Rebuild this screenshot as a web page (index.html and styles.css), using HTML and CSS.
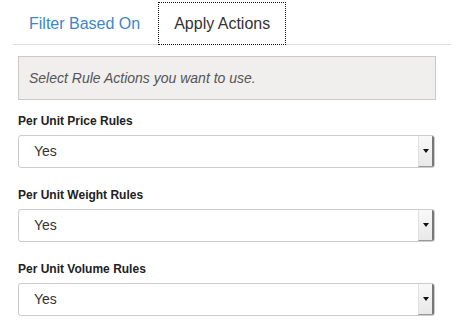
FILE: index.html
```html
<!DOCTYPE html>
<html lang="en">
<head>
    <meta charset="UTF-8">
    <meta name="viewport" content="width=device-width, initial-scale=1.0">
    <title>Rule Actions</title>
    <link rel="stylesheet" href="styles.css">
</head>

<body>

    <ul class="nav-tabs">
        <li><a href="#">Filter Based On</a></li>
        <li class="active"><a href="#">Apply Actions</a></li>
    </ul>

    <div class="painel">
        <div class="aviso">Select Rule Actions you want to use.</div>

        <div class="grupo">
            <label>Per Unit Price Rules</label>
            <div class="selecao">
                <span class="valor">Yes</span>
                <span class="seta">
                    <svg width="6" height="4" viewBox="0 0 6 4"><path d="M0 0H6L3 4Z" fill="#111"/></svg>
                </span>
            </div>
        </div>

        <div class="grupo">
            <label>Per Unit Weight Rules</label>
            <div class="selecao">
                <span class="valor">Yes</span>
                <span class="seta">
                    <svg width="6" height="4" viewBox="0 0 6 4"><path d="M0 0H6L3 4Z" fill="#111"/></svg>
                </span>
            </div>
        </div>

        <div class="grupo">
            <label>Per Unit Volume Rules</label>
            <div class="selecao">
                <span class="valor">Yes</span>
                <span class="seta">
                    <svg width="6" height="4" viewBox="0 0 6 4"><path d="M0 0H6L3 4Z" fill="#111"/></svg>
                </span>
            </div>
        </div>
    </div>

</body>
</html>
```

FILE: styles.css
```css
* {
    font-family: "Liberation Sans", Arial, sans-serif;
    margin: 0;
    padding: 0;
    box-sizing: border-box;
}

body {
    background-color: #fff;
    color: #333;
    font-size: 14px;
}

/* Abas */
.nav-tabs {
    list-style: none;
    display: flex;
    margin: 0 8px 0 13px;
    padding-top: 2px;
    border-bottom: 1px solid #ddd;
}

.nav-tabs li {
    margin-right: 2px;
    margin-bottom: -1px;
}

.nav-tabs a {
    display: block;
    padding: 10px 15px;
    font-size: 16px;
    line-height: 21px;
    color: #3b87c9;
    text-decoration: none;
    border: 1px solid transparent;
}

.nav-tabs .active a {
    color: #333;
    background-color: #fff;
    border: 1px dotted #111;
}

/* Conteúdo */
.painel {
    margin: 11px 23px 0 18px;
}

.aviso {
    background-color: #f0efee;
    border: 1px solid #c9c9c9;
    padding: 12px 10px;
    height: 44px;
    font-style: italic;
    color: #555;
    font-size: 14px;
    line-height: 18px;
}

.grupo {
    margin-top: 13px;
    margin-bottom: 19px;
}

.grupo label {
    display: block;
    font-size: 12px;
    font-weight: bold;
    line-height: 17px;
    margin-bottom: 5px;
    color: #222;
}

.selecao {
    display: flex;
    height: 33px;
    width: 417px;
    border: 1px solid #ccc;
    border-radius: 3px;
    background-color: #fff;
    overflow: hidden;
}

.selecao .valor {
    flex: 1;
    padding-left: 15px;
    line-height: 31px;
    font-size: 14px;
    color: #333;
}

.selecao .seta {
    width: 16px;
    display: flex;
    align-items: center;
    justify-content: center;
    background: linear-gradient(#f9f9f9, #e8e8e8);
    border-left: 1px solid #e0e0e0;
    border-right: 2px solid #777;
    border-bottom: 1px solid #999;
}
```
